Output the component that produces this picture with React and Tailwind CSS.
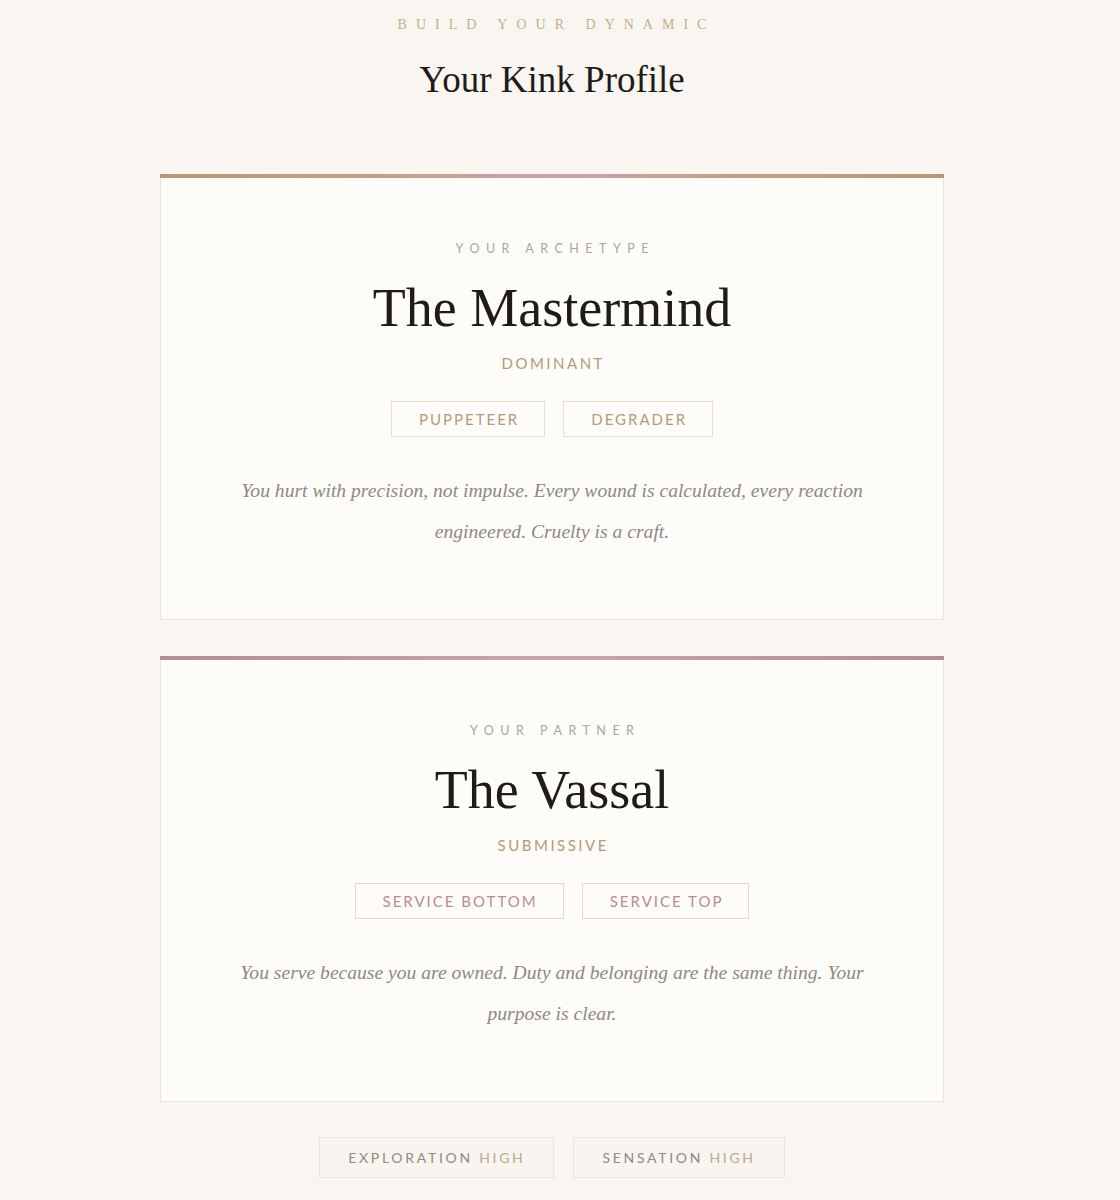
import React from "react";

const serif = { fontFamily: '"Liberation Serif", "DejaVu Serif", serif' };
const sans = { fontFamily: 'Lato, "Open Sans", sans-serif' };

function Tag({ children, pink }) {
  return (
    <div
      className={`h-[36px] px-[25px] flex items-center border text-[15px] tracking-[2px] ${
        pink ? "border-[#e6d6d6] text-[#b98c94]" : "border-[#e8dfd3] text-[#b39b78]"
      }`}
      style={sans}
    >
      <span className="pl-[2px]">{children}</span>
    </div>
  );
}

function Card({ label, title, role, tags, desc, pink }) {
  return (
    <div className="w-[784px] bg-[#fdfcf9] border border-[#e9e4de] border-t-0 flex flex-col">
      <div
        className={`h-[4px] -mx-px ${
          pink
            ? "bg-linear-to-r from-[#b98a92] via-[#cfa4a6] to-[#b98a92]"
            : "bg-linear-to-r from-[#b8996d] via-[#cda3a3] to-[#b8996d]"
        }`}
      />
      <div className="flex flex-col items-center pt-[63px] pb-[67px]">
        <div className="h-[16px] leading-[16px] text-[12.5px] tracking-[6.5px] pl-[6.5px] text-[#aaa59e]" style={sans}>
          {label}
        </div>
        <div className="mt-[21px] h-[60px] leading-[60px] text-[54px] text-[#1e1b18]" style={serif}>
          {title}
        </div>
        <div className="mt-[15px] h-[20px] leading-[20px] text-[15px] tracking-[2.5px] pl-[2.5px] text-[#b39b76]" style={sans}>
          {role}
        </div>
        <div className="mt-[28px] flex gap-[18px]">
          {tags.map((t) => (
            <Tag key={t} pink={pink}>
              {t}
            </Tag>
          ))}
        </div>
        <p className="mt-[33px] w-[650px] text-center italic text-[19.6px] leading-[41px] text-[#8e8983]" style={serif}>
          {desc}
        </p>
      </div>
    </div>
  );
}

function Pill({ name, level }) {
  return (
    <div
      className="h-[41px] px-[28px] flex items-center border border-[#ebe5de] bg-[#f8f4ef] text-[14px] tracking-[2.7px]"
      style={sans}
    >
      <span className="text-[#8f8a83] whitespace-pre">{name} </span>
      <span className="text-[#bea886]">{level}</span>
    </div>
  );
}

export default function App() {
  return (
    <div className="min-h-[1200px] bg-[#f9f6f2]">
      <div className="w-[1104px] flex flex-col items-center pt-[15px] pb-[40px]">
        <div className="h-[20px] leading-[20px] text-[14px] tracking-[9px] pl-[9px] text-[#c6ad8b]" style={serif}>
          BUILD YOUR DYNAMIC
        </div>
        <h1 className="mt-[23px] h-[44px] leading-[44px] text-[37px] text-[#1e1b18]" style={serif}>
          Your Kink Profile
        </h1>
        <div className="mt-[72px] flex flex-col gap-[36px]">
          <Card
            label="YOUR ARCHETYPE"
            title="The Mastermind"
            role="DOMINANT"
            tags={["PUPPETEER", "DEGRADER"]}
            desc="You hurt with precision, not impulse. Every wound is calculated, every reaction engineered. Cruelty is a craft."
          />
          <Card
            pink
            label="YOUR PARTNER"
            title="The Vassal"
            role="SUBMISSIVE"
            tags={["SERVICE BOTTOM", "SERVICE TOP"]}
            desc="You serve because you are owned. Duty and belonging are the same thing. Your purpose is clear."
          />
        </div>
        <div className="mt-[35px] flex gap-[19px]">
          <Pill name="EXPLORATION" level="HIGH" />
          <Pill name="SENSATION" level="HIGH" />
        </div>
      </div>
    </div>
  );
}
